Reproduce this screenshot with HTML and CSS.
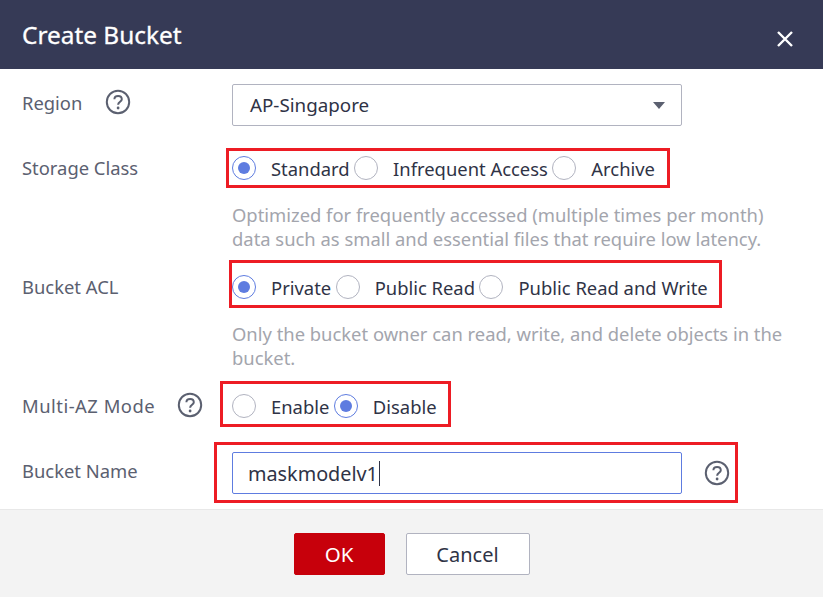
FILE: index.html
```html
<!DOCTYPE html>
<html lang="en">
<head>
<meta charset="utf-8">
<title>Create Bucket</title>
<link rel="stylesheet" href="styles.css">
</head>
<body>
<div class="dialog">
  <header class="head">
    <h1 class="title">Create Bucket</h1>
    <svg class="close" width="16" height="16" viewBox="0 0 16 16"><path d="M1 1 L15 15 M15 1 L1 15" stroke="#fff" stroke-width="2.4" fill="none"/></svg>
  </header>
  <main class="body">
    <div class="row row-region">
      <div class="label label-region"><span>Region</span>
        <svg class="help help-region" width="26" height="26" viewBox="0 0 26 26"><circle cx="13" cy="13" r="11.2" fill="none" stroke="#5b6070" stroke-width="2"/><path d="M9.4 10.2 C9.4 5.9 16.8 5.9 16.8 10.2 C16.8 12.8 13.1 12.8 13.1 15.8" fill="none" stroke="#5b6070" stroke-width="2"/><circle cx="13.1" cy="19" r="1.4" fill="#5b6070"/></svg>
      </div>
      <div class="select"><span>AP-Singapore</span><i class="caret"></i></div>
    </div>

    <div class="row row-storage">
      <div class="label">Storage Class</div>
      <div class="radios">
        <span class="radio on"></span><span class="opt">Standard</span>
        <span class="radio"></span><span class="opt">Infrequent Access</span>
        <span class="radio"></span><span class="opt">Archive</span>
      </div>
      <div class="mark mark-storage"></div>
    </div>
    <p class="hint hint-storage">Optimized for frequently accessed (multiple times per month) data such as small and essential files that require low latency.</p>

    <div class="row row-acl">
      <div class="label">Bucket ACL</div>
      <div class="radios">
        <span class="radio on"></span><span class="opt">Private</span>
        <span class="radio"></span><span class="opt">Public Read</span>
        <span class="radio"></span><span class="opt">Public Read and Write</span>
      </div>
      <div class="mark mark-acl"></div>
    </div>
    <p class="hint hint-acl">Only the bucket owner can read, write, and delete objects in the bucket.</p>

    <div class="row row-az">
      <div class="label"><span class="label-wide">Multi-AZ Mode</span>
        <svg class="help help-az" width="26" height="26" viewBox="0 0 26 26"><circle cx="13" cy="13" r="11.2" fill="none" stroke="#5b6070" stroke-width="2"/><path d="M9.4 10.2 C9.4 5.9 16.8 5.9 16.8 10.2 C16.8 12.8 13.1 12.8 13.1 15.8" fill="none" stroke="#5b6070" stroke-width="2"/><circle cx="13.1" cy="19" r="1.4" fill="#5b6070"/></svg>
      </div>
      <div class="radios">
        <span class="radio"></span><span class="opt">Enable</span>
        <span class="radio on"></span><span class="opt">Disable</span>
      </div>
      <div class="mark mark-az"></div>
    </div>

    <div class="row row-name">
      <div class="label label-name">Bucket Name</div>
      <div class="input"><span>maskmodelv1</span><i class="cursor"></i></div>
      <svg class="help help-name" width="26" height="26" viewBox="0 0 26 26"><circle cx="13" cy="13" r="11.2" fill="none" stroke="#5b6070" stroke-width="2"/><path d="M9.4 10.2 C9.4 5.9 16.8 5.9 16.8 10.2 C16.8 12.8 13.1 12.8 13.1 15.8" fill="none" stroke="#5b6070" stroke-width="2"/><circle cx="13.1" cy="19" r="1.4" fill="#5b6070"/></svg>
      <div class="mark mark-name"></div>
    </div>
  </main>
  <footer class="foot">
    <button class="btn ok">OK</button>
    <button class="btn cancel">Cancel</button>
  </footer>
</div>
</body>
</html>
```
FILE: styles.css
```css
* { box-sizing: border-box; }
html, body { margin: 0; padding: 0; }
body { width: 823px; height: 597px; overflow: hidden; background: #fff; font-family: "Noto Sans", "Open Sans", sans-serif; font-size: 18.4px; color: #2f3346; }
.dialog { display: flex; flex-direction: column; height: 597px; }
.head { height: 69px; flex: none; background: #363a56; display: flex; align-items: center; justify-content: space-between; padding: 0 30px 0 22px; }
.title { margin: 0; font-size: 24.4px; font-weight: 400; color: #fff; line-height: 32px; -webkit-text-stroke: 0.3px #fff; }
.close { margin-top: 9px; }
.body { flex: 1; padding-top: 15px; }
.row { position: relative; display: flex; align-items: center; padding-left: 22px; }
.label { width: 210px; flex: none; color: #5b6070; display: flex; align-items: center; margin-bottom: 2px; }
.label-region { margin-bottom: 6px; }
.label-name { margin-bottom: 6px; }
.label-wide { letter-spacing: 0.5px; }
.help { flex: none; }
.help-region { margin-left: 23px; }
.help-az { margin-left: 22px; }
.help-name { margin-left: 22px; }
.select, .input { width: 450px; height: 42px; border: 1px solid #b1b3c0; border-radius: 2px; padding: 0 16px 0 17px; display: flex; align-items: center; background: #fff; }
.select { justify-content: space-between; font-size: 18.8px; }
.caret { width: 0; height: 0; border-left: 6px solid transparent; border-right: 6px solid transparent; border-top: 7px solid #5b6070; }
.input { border-color: #5e7ce0; font-size: 19.8px; padding-left: 15px; }
.cursor { width: 1px; height: 25px; background: #2f3346; margin-left: 1px; }
.radios { display: flex; align-items: center; }
.radio { width: 24px; height: 24px; flex: none; border: 1px solid #b1b3c0; border-radius: 50%; background: #fff; position: relative; }
.radio.on { border-color: #5e7ce0; }
.radio.on::after { content: ""; position: absolute; inset: 5px; border-radius: 50%; background: #5e7ce0; }
.opt { margin-left: 15px; margin-right: 4.5px; }
.row-storage { margin-top: 22px; height: 40px; }
.row-acl { margin-top: 16px; height: 40px; }
.row-az { margin-top: 16px; height: 40px; }
.row-name { margin-top: 26px; height: 42px; }
.hint { margin: 15px 0 0 232px; width: 565px; line-height: 24px; color: #a3a5ad; }
.mark { position: absolute; border: 3px solid #ed1c24; pointer-events: none; }
.mark-storage { left: 226px; top: 0; width: 444px; height: 40px; }
.mark-acl { left: 229px; top: -7px; width: 493px; height: 48px; }
.mark-az { left: 220px; top: -5px; width: 231px; height: 46px; }
.mark-name { left: 214px; top: -10px; width: 524px; height: 61px; }
.foot { height: 88px; flex: none; background: #f3f3f3; border-top: 1px solid #e8e8e8; display: flex; justify-content: center; align-items: flex-start; gap: 21px; padding-top: 23px; }
.btn { height: 42px; border-radius: 2px; font: inherit; padding: 0; }
.ok { width: 91px; background: #c7000b; border: 1px solid #c7000b; color: #fff; font-size: 20.5px; }
.cancel { width: 124px; background: #fff; border: 1px solid #b1b3c0; color: #2f3346; font-size: 20px; }
```
